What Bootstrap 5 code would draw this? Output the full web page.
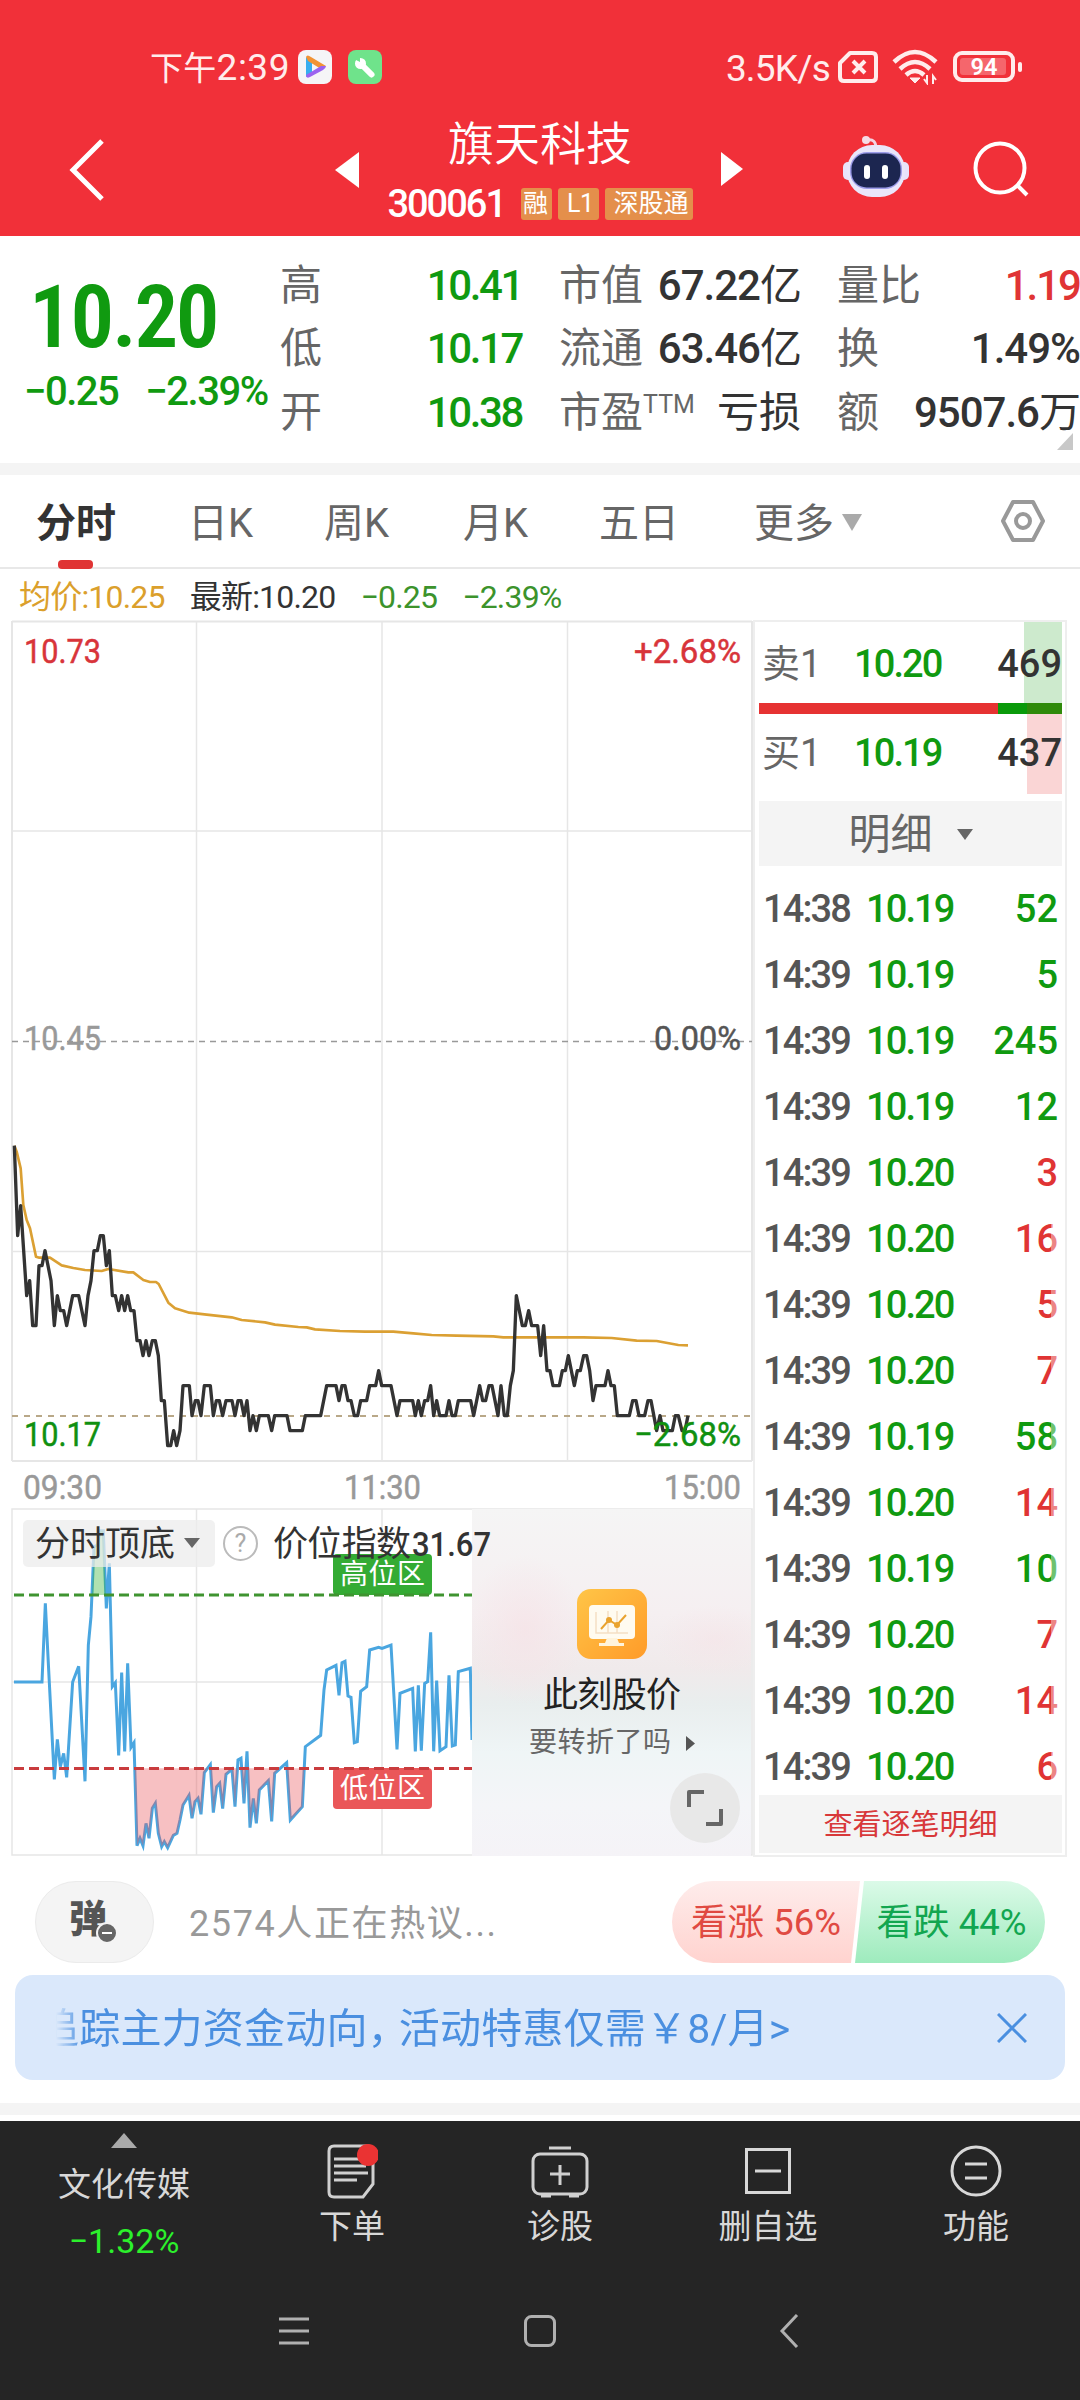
<!DOCTYPE html>
<html lang="zh-CN">
<head>
<meta charset="utf-8">
<meta name="viewport" content="width=device-width, initial-scale=1">
<title>旗天科技 300061</title>
<link href="https://cdn.jsdelivr.net/npm/bootstrap@5.3.0/dist/css/bootstrap.min.css" rel="stylesheet">
<style>
:root{--up:#e03434;--down:#109a10;--ink:#333;--sub:#666;--line:#ebebeb}
body{width:1080px;height:2400px;margin:0;overflow:hidden;background:#fff;color:var(--ink);line-height:1;
 font-family:Roboto,"Noto Sans CJK SC",sans-serif;font-stretch:100%}
svg{display:block;flex:none}
.c-down{color:var(--down)}.c-up{color:var(--up)}.c-sub{color:var(--sub)}
.top-area{height:236px;background:#f13039;color:#fff}
.status-bar{height:134px;padding:0 58px 0 150px;font-size:33px;color:#ffecec}
.status-bar span{white-space:nowrap}
.title-bar{height:102px;padding:0 50px 0 69px}
.stock-name{font-size:46px;font-weight:350;line-height:58px}
.stock-code{font-size:38px;font-weight:500;letter-spacing:-2px;margin-right:10px}
.tag-chip{background:#e48f4b;color:#fff;font-size:25px;height:32px;line-height:32px;border-radius:3px;padding:0 4px;font-weight:400}
.quote{height:227px;position:relative}
.price-box{width:280px;padding:38px 0 0 24px}
.price-big{font-size:87px;font-weight:600;line-height:87px;margin-left:5px;letter-spacing:-2.3px;font-stretch:75%}
.price-chg{font-size:40px;font-weight:500;gap:27px;margin-top:11px;white-space:nowrap;letter-spacing:-1.5px}
.q-col{padding-top:18px;font-size:42px;white-space:nowrap}
.q-col>div{height:63.5px}
.q-col b{font-weight:500;letter-spacing:-2.4px}
.q-col.wide-num b{letter-spacing:-1px}
.q-col.wide-num b.tight{letter-spacing:-2px}
.w-q{width:242px}
.divider-bar{height:12px;background:#f4f4f4}
.tabs{height:94px;display:grid;grid-template-columns:152px 136px 139px 136px 155px 247px 50px;padding-left:36px;border-bottom:2px solid #e8e8e8;font-size:40px;color:var(--sub);align-items:center}
.tabs>span{padding-top:6px}
.tabs .active{color:var(--ink);font-weight:600;position:relative}
.tabs .active::after{content:"";position:absolute;left:22px;bottom:-25px;width:35px;height:9px;border-radius:4px;background:var(--up)}
.info-row{height:51px;padding:4px 0 0 19px;font-size:32px;gap:25px;white-space:nowrap;letter-spacing:-.8px}
.main-area{height:1240px;padding-left:10px}
.left-col{width:743px}
.side-panel{width:314px;height:1237px;border:2px solid #eee;padding:0 3px 0 4px;font-weight:500;position:relative;letter-spacing:-1.9px}
.book-row{padding:0 0 0 3px;font-size:38px;position:relative}
.vol{letter-spacing:0}
.depth{position:absolute;right:0;top:0;height:100%}
.tick-list .tick{height:66px;padding:0 4px 0 4px;font-size:38px}
.fadeout{position:absolute;right:3px;top:580px;bottom:62px;width:11px;background:rgba(255,255,255,.4)}
.detail-btn{height:65px;background:#f4f4f4;color:var(--sub);font-size:42px;font-weight:400;letter-spacing:0;padding-top:2px}
.more-btn{height:58px;background:#f4f4f4;color:#d8383a;font-size:29px;font-weight:400;padding-top:3px;letter-spacing:0}
.talk-row{height:115px;padding:21px 35px 12px}
.dm-pill{width:119px;height:82px;border-radius:41px;background:#f4f4f4;border:1px solid #ebebeb}
.talk-txt{font-size:36px;color:#999;margin-left:35px;letter-spacing:1.6px;padding-top:3px}
.vote{width:373px;height:82px;border-radius:41px;overflow:hidden;font-size:36.500px;white-space:nowrap}
.vote>div{padding-top:2px}
.vote-up{width:190px;background:linear-gradient(#feeceb,#ffd3cf);color:#e04a42;clip-path:polygon(0 0,100% 0,calc(100% - 9px) 100%,0 100%)}
.vote-down{width:192px;margin-left:-5px;background:linear-gradient(#dbfae8,#9eebbd);color:#12a650;clip-path:polygon(9px 0,100% 0,100% 100%,0 100%);padding-left:3px}
.promo{margin:0 15px;height:105px;border-radius:18px;background:#dae8fb;color:#4a8fe0;font-size:41px;padding:0 38px 0 41px}
.promo-txt{height:60px;line-height:62px;width:780px;overflow:hidden;white-space:nowrap;letter-spacing:.2px;-webkit-mask:linear-gradient(90deg,transparent,#000 26px);mask:linear-gradient(90deg,transparent,#000 26px)}
.promo-txt span{display:inline-block;margin-left:-18px}
.promo-txt i{font-style:normal;margin-right:-10px}
.bottom-bar{height:279px;background:#252525;color:#d8d8d8;font-size:33px}
.bottom-bar .item{width:208px}
.sys-nav{height:40px;margin-top:-5px}
</style>
</head>
<body>
<header class="top-area">
 <div class="status-bar d-flex align-items-center">
  <span style="letter-spacing:.3px;width:138px;padding-top:1px">下午<span style="font-size:37px;letter-spacing:.5px">2:39</span></span>
  <svg style="margin-left:10px" width="34" height="34" viewBox="0 0 34 34"><rect width="34" height="34" rx="8" fill="#f5f5f7"/><path d="M8 7v20l6-3V12z" fill="#36aef0"/><path d="M8 7q1-3 5 0l15 9-5 3L10 11z" fill="#f29335"/><path d="M28 16q0 2-3 4L12 27q-4 2-4-2l15-9z" fill="#9b63f0"/></svg>
  <svg style="margin-left:16px" width="34" height="34" viewBox="0 0 34 34"><rect width="34" height="34" rx="8" fill="#6fe38b"/><circle cx="12.500" cy="13.500" r="5.500" fill="#fff"/><path d="M12 4v8l-6-3z" fill="#6fe38b"/><path d="M14 15l9.500 9.500" stroke="#fff" stroke-width="6" stroke-linecap="round"/></svg>
  <span class="ms-auto" style="font-size:37px;letter-spacing:-.8px;margin-right:8px;padding-top:2px">3.5K/s</span>
  <svg width="40" height="34" viewBox="0 0 40 34" fill="none" stroke="#ffecec" stroke-width="4"><path d="M12 3h22q4 0 4 4v20q0 4-4 4H6q-4 0-4-4V13z" stroke-linejoin="round"/><path d="M15 11l12 12M27 11L15 23"/></svg>
  <svg style="margin-left:14px" width="46" height="36" viewBox="0 0 46 36" fill="none" stroke="#ffecec" stroke-width="4.500"><path d="M2 13q21-20 42 0M8 20q15-14 30 0M14 26q9-8 18 0"/><path d="M18 29h10l-5 5z" fill="#ffecec" stroke-width="1"/><path d="M35 26v8l-3-4M41 35v-8l3 4" stroke-width="2"/></svg>
  <svg style="margin-left:15px" width="69" height="32" viewBox="0 0 69 32"><rect x="2" y="2" width="58" height="27" rx="7" fill="none" stroke="#ffecec" stroke-width="4"/><rect x="7" y="7" width="46" height="17" rx="3" fill="#f5666c"/><rect x="65" y="11" width="4" height="10" rx="2" fill="#ffecec"/><text x="31" y="24" font-size="23" font-weight="600" fill="#fff" text-anchor="middle" textLength="27" lengthAdjust="spacingAndGlyphs">94</text></svg>
 </div>
 <div class="title-bar d-flex">
  <svg style="margin-top:5px" width="36" height="62" viewBox="0 0 36 62"><path d="M33 2L4 31l29 29" fill="none" stroke="#fff" stroke-width="5"/></svg>
  <svg style="margin:18px 0 0 230px" width="24" height="36"><path d="M24 0v36L0 18z" fill="#fff"/></svg>
  <div style="width:362px;margin-top:-19px" class="d-flex flex-column align-items-center">
   <div class="stock-name">旗天科技</div>
   <div class="d-flex align-items-center" style="height:36px;gap:6px;margin-top:13px"><span class="stock-code">300061</span><span class="tag-chip" style="padding-left:2px">融</span><span class="tag-chip" style="padding:0 5px 0 9px;letter-spacing:-.5px">L1</span><span class="tag-chip" style="padding:0 4px 0 9px">深股通</span></div>
  </div>
  <svg style="margin-top:18px" width="22" height="34"><path d="M0 0v34l22-17z" fill="#fff"/></svg>
  <svg style="margin:1px 0 0 99px" width="68" height="64" viewBox="0 0 68 64"><path d="M25 5q9-2 9 9" fill="none" stroke="#f3d3e2" stroke-width="3"/><circle cx="24" cy="5" r="4" fill="#f6dbe6"/><rect x="1" y="27" width="12" height="18" rx="5" fill="#e8e3fb"/><rect x="55" y="27" width="12" height="18" rx="5" fill="#e8e3fb"/><rect x="5" y="10" width="58" height="52" rx="25" fill="#eae6fa"/><rect x="8" y="17" width="52" height="37" rx="17" fill="#9b9be8"/><rect x="9.500" y="18.500" width="49" height="34" rx="15" fill="#1c2650"/><rect x="22" y="30" width="6" height="14" rx="3" fill="#fff"/><rect x="40" y="30" width="6" height="14" rx="3" fill="#fff"/></svg>
  <svg style="margin:7px 0 0 62px" width="58" height="58" viewBox="0 0 58 58" fill="none" stroke="#fff" stroke-width="4"><circle cx="28" cy="27" r="24.500"/><path d="M45 44l10 10"/></svg>
 </div>
</header>

<section class="quote d-flex">
 <div class="price-box c-down">
  <div class="price-big">10.20</div>
  <div class="price-chg d-flex"><span>−0.25</span><span>−2.39%</span></div>
 </div>
 <div class="q-col w-q">
  <div class="d-flex justify-content-between align-items-center"><span class="c-sub">高</span><b class="c-down">10.41</b></div>
  <div class="d-flex justify-content-between align-items-center"><span class="c-sub">低</span><b class="c-down">10.17</b></div>
  <div class="d-flex justify-content-between align-items-center"><span class="c-sub">开</span><b class="c-down">10.38</b></div>
 </div>
 <div class="q-col w-q wide-num" style="margin-left:37px">
  <div class="d-flex justify-content-between align-items-center"><span class="c-sub">市值</span><b>67.22<span class="fw-normal">亿</span></b></div>
  <div class="d-flex justify-content-between align-items-center"><span class="c-sub">流通</span><b>63.46<span class="fw-normal">亿</span></b></div>
  <div class="d-flex justify-content-between align-items-center"><span class="c-sub">市盈<sup style="font-size:25px;top:-14px">TTM</sup></span><span>亏损</span></div>
 </div>
 <div class="q-col wide-num" style="margin-left:36px;width:243px">
  <div class="d-flex justify-content-between align-items-center"><span class="c-sub">量比</span><b class="c-up tight">1.19</b></div>
  <div class="d-flex justify-content-between align-items-center"><span class="c-sub">换</span><b>1.49%</b></div>
  <div class="d-flex justify-content-between align-items-center"><span class="c-sub">额</span><b>9507.6<span class="fw-normal">万</span></b></div>
 </div>
 <svg class="position-absolute" style="right:7px;bottom:13px" width="16" height="17"><path d="M16 0v17H0z" fill="#c8c8c8"/></svg>
</section>
<div class="divider-bar"></div>

<nav class="tabs">
 <span class="active">分时</span><span>日K</span><span>周K</span><span>月K</span><span>五日</span>
 <span class="d-flex align-items-center">更多<svg style="margin:-4px 0 0 8px" width="20" height="17"><path d="M0 0h20L10 17z" fill="#aaa"/></svg></span>
 <svg width="44" height="44" viewBox="0 0 44 44" fill="none" stroke="#999" stroke-width="4"><path d="M12 3h20l10 19-10 19H12L2 22z" stroke-linejoin="round"/><circle cx="22" cy="22" r="7"/></svg>
</nav>

<div class="info-row d-flex align-items-center">
 <span style="color:#dba02c">均价:10.25</span><span>最新:10.20</span><span style="color:#3c932c">−0.25</span><span style="color:#3c932c">−2.39%</span>
</div>

<main class="main-area d-flex">
 <div class="left-col">
  <svg width="743" height="1240" viewBox="10 620 743 1240" font-size="34">
   <defs>
    <clipPath id="low"><rect x="402" y="835" width="512" height="300"/></clipPath>
    <clipPath id="high"><rect x="276" y="90" width="44" height="225"/></clipPath>
    <linearGradient id="haze" x1="0" y1="0" x2="0" y2="1"><stop offset="0" stop-color="#f5f5f5"/><stop offset=".3" stop-color="#f5eff1"/><stop offset=".46" stop-color="#f0eaeb"/><stop offset=".56" stop-color="#e9eeee"/><stop offset=".7" stop-color="#eff5f6"/><stop offset=".85" stop-color="#f4f5f8"/><stop offset="1" stop-color="#f5f3f7"/></linearGradient>
    <radialGradient id="blush"><stop offset="0" stop-color="#f6e2e6"/><stop offset="1" stop-color="#f6e2e6" stop-opacity="0"/></radialGradient>
    <linearGradient id="gold" x1="0" y1="0" x2="1" y2="1"><stop offset="0" stop-color="#ffc547"/><stop offset="1" stop-color="#ff9b29"/></linearGradient>
    <clipPath id="adbox"><rect x="472" y="1509" width="279" height="347"/></clipPath>
   </defs>
   <g fill="none" stroke="#e6e6e6" stroke-width="1.500">
    <path d="M12 621.500H752M12 1461H752M12 621V1461M752 621V1461" stroke-width="2"/>
    <path d="M196.500 621V1461M382 621V1461M567.500 621V1461M12 831H752M12 1251.500H752"/>
    <path d="M12 1509H752V1855H12zM196.500 1509V1855M382 1509V1855M12 1682H472"/>
   </g>
   <path d="M12 1041.500H752" stroke="#999" stroke-width="1.500" stroke-dasharray="6 5"/>
   <path d="M12 1416H752" stroke="#b9a888" stroke-width="1.800" stroke-dasharray="6 6"/>
   <g fill="none" stroke-linejoin="round" transform="translate(0 1120) scale(.33333)">
    <polyline stroke="#dba033" stroke-width="8" points="43,77 50,95 62,145 70,255 80,300 90,325 108,410 118,413 150,413 185,436 220,444 255,450 305,453 325,447 385,457 400,457 430,480 450,486 468,486 476,492 505,548 525,565 568,578 620,584 695,592 725,600 795,607 825,614 895,621 920,622 945,628 1020,633 1095,635 1180,635 1240,640 1295,645 1370,647 1480,649 1510,652 1750,652 1835,654 1910,662 1970,663 2035,675 2064,676"/>
    <polyline stroke="#333" stroke-width="10" points="43,77 53,347 62,257 80,527 89,482 98,617 108,617 117,437 126,437 135,392 144,437 153,482 163,617 172,527 181,572 191,572 200,617 218,527 236,527 255,617 264,527 273,482 282,392 292,392 301,347 310,347 319,437 328,392 337,527 346,527 356,572 365,527 374,572 383,527 392,572 402,572 411,662 420,662 429,707 438,662 447,707 457,662 466,662 475,707 484,842 493,842 503,977 512,977 521,932 530,977 540,932 549,797 568,797 576,887 586,842 594,842 603,887 613,797 631,797 640,887 649,842 658,842 668,887 678,842 696,842 705,887 714,842 723,842 732,887 741,842 750,932 759,887 769,932 778,887 805,887 815,932 824,887 861,887 870,932 907,932 916,887 962,887 980,797 1008,797 1017,842 1026,797 1035,797 1044,842 1053,842 1063,887 1073,887 1082,842 1100,842 1109,797 1127,797 1136,752 1145,797 1173,797 1191,887 1200,842 1238,842 1246,887 1255,842 1264,887 1274,842 1283,842 1292,797 1301,887 1310,842 1319,887 1338,887 1347,842 1356,887 1366,887 1375,842 1412,842 1421,887 1439,797 1448,842 1457,842 1467,797 1476,797 1494,887 1503,797 1513,887 1522,887 1531,797 1540,752 1549,527 1567,617 1576,617 1586,572 1595,617 1613,617 1622,707 1631,617 1641,752 1650,752 1659,797 1678,797 1687,752 1696,752 1705,707 1723,797 1732,752 1741,752 1751,707 1760,707 1769,752 1779,842 1788,797 1815,797 1824,752 1833,797 1843,797 1852,887 1888,887 1898,842 1908,842 1917,887 1934,887 1944,842 1953,842 1970,932 1980,887 1989,932 2017,932 2026,887 2035,887 2046,932 2055,932 2064,887"/>
   </g>
   <g stroke-width=".5">
    <text x="24" y="663" fill="#d8343a" stroke="#d8343a" textLength="77" lengthAdjust="spacingAndGlyphs">10.73</text>
    <text x="634" y="663" fill="#d8343a" stroke="#d8343a" textLength="107" lengthAdjust="spacingAndGlyphs">+2.68%</text>
    <text x="24" y="1050" fill="#999" stroke="#999" textLength="77" lengthAdjust="spacingAndGlyphs">10.45</text>
    <text x="654" y="1050" fill="#555" stroke="#555" textLength="87" lengthAdjust="spacingAndGlyphs">0.00%</text>
    <text x="24" y="1446" fill="#109010" stroke="#109010" textLength="77" lengthAdjust="spacingAndGlyphs">10.17</text>
    <text x="634" y="1446" fill="#109010" stroke="#109010" textLength="107" lengthAdjust="spacingAndGlyphs">−2.68%</text>
    <g fill="#999" stroke="#999"><text x="23" y="1498.500" textLength="79" lengthAdjust="spacingAndGlyphs">09:30</text><text x="344" y="1498.500" textLength="77" lengthAdjust="spacingAndGlyphs">11:30</text><text x="664" y="1498.500" textLength="77" lengthAdjust="spacingAndGlyphs">15:00</text></g>
   </g>
   <g transform="translate(0 1490) scale(.33333)">
    <polyline fill="none" stroke="#4aa6e0" stroke-width="9" points="42,576 126,576 136,340 145,520 163,868 172,748 181,830 191,790 200,862 218,576 236,529 255,874 265,465 273,380 282,170 292,165 301,122 310,122 319,355 328,220 337,590 346,578 356,796 365,548 374,784 383,520 393,772 402,758 411,1067 420,1045 429,1067 438,1000 447,1045 457,955 466,940 475,1030 485,1070 493,1055 503,1073 520,1036 531,1030 540,990 549,945 567,916 576,985 585,935 594,925 603,973 613,848 631,824 640,968 650,890 659,880 668,956 678,853 696,838 705,950 714,810 723,805 732,940 741,784 750,1013 760,925 769,1000 778,900 805,872 815,994 824,850 860,818 871,990 907,950 916,770 962,736 972,600 980,540 1008,526 1017,616 1026,518 1035,514 1044,618 1053,622 1063,758 1072,755 1082,604 1100,590 1109,480 1136,472 1146,475 1173,465 1191,778 1200,610 1238,595 1246,784 1255,586 1264,782 1274,580 1283,575 1292,427 1301,784 1310,572 1320,782 1338,770 1347,556 1357,768 1366,765 1375,545 1411,535 1416,750"/>
    <path clip-path="url(#low)" fill="#e85055" fill-opacity=".36" d="M402 758L411 1067 420 1045 429 1067 438 1000 447 1045 457 955 466 940 475 1030 485 1070 493 1055 503 1073 520 1036 531 1030 540 990 549 945 567 916 576 985 585 935 594 925 603 973 613 848 631 824 640 968 650 890 659 880 668 956 678 853 696 838 705 950 714 810 723 805 732 940 741 784 750 1013 760 925 769 1000 778 900 805 872 815 994 824 850 860 818 871 990 907 950 916 770z"/>
    <path clip-path="url(#high)" fill="#30b030" fill-opacity=".38" d="M273 380L282 170 292 165 301 122 310 122 319 355z"/>
   </g>
   <rect x="333" y="1554" width="99" height="41" rx="4" fill="#34ab34"/><rect x="333" y="1768" width="99" height="41" rx="4" fill="#ea5759"/>
   <path d="M14 1595H472" stroke="#3f9430" stroke-width="3" stroke-dasharray="10 5"/>
   <path d="M14 1768.500H472" stroke="#c93c3e" stroke-width="3" stroke-dasharray="10 5"/>
   <g fill="#fff" font-size="28"><text x="340" y="1584" textLength="85">高位区</text><text x="340" y="1798" textLength="85">低位区</text></g>
   <g clip-path="url(#adbox)"><rect x="472" y="1509" width="281" height="348" fill="url(#haze)"/><ellipse cx="525" cy="1630" rx="60" ry="75" fill="url(#blush)" opacity=".7"/><ellipse cx="715" cy="1640" rx="60" ry="35" fill="url(#blush)" opacity=".5"/></g>
   <rect x="23" y="1520" width="192" height="47" rx="5" fill="#ececec" fill-opacity=".75"/>
   <text x="35" y="1556" font-size="35" fill="#333" textLength="140">分时顶底</text>
   <path d="M184 1538h16l-8 10z" fill="#666"/>
   <circle cx="240.500" cy="1543.500" r="16.500" fill="none" stroke="#bbb" stroke-width="2"/><text x="240.500" y="1552" text-anchor="middle" font-size="25" fill="#aaa">?</text>
   <text x="273" y="1556" font-size="35" fill="#333" textLength="138">价位指数</text><text x="412" y="1555.500" font-size="34" font-weight="500" fill="#333" textLength="79" lengthAdjust="spacingAndGlyphs">31.67</text>
   <rect x="577" y="1589" width="70" height="70" rx="14" fill="url(#gold)"/>
   <rect x="589" y="1605" width="46" height="34" rx="4" fill="#fffbf0"/><path d="M607 1638h10l2 5h5v3h-25v-3h6z" fill="#fff4dc"/><path d="M596 1612v21h32M608 1611v22M617 1611v22" fill="none" stroke="#f5dfc4" stroke-width="1.500"/><path d="M601 1629l8-9 8 5 9-10" fill="none" stroke="#e9a32f" stroke-width="2"/><circle cx="609" cy="1620" r="3" fill="#e9a32f"/><circle cx="617" cy="1625" r="3" fill="#e9a32f"/>
   <text x="543" y="1707" font-size="35" fill="#222" textLength="138">此刻股价</text>
   <text x="529" y="1752" font-size="28" fill="#666" textLength="142">要转折了吗</text>
   <path d="M686 1736v15l9-7.500z" fill="#555"/>
   <circle cx="705" cy="1808" r="35" fill="#e8e8e8"/><path d="M689 1807v-15h15M721 1809v15h-15" fill="none" stroke="#666" stroke-width="4" stroke-linejoin="round"/>
  </svg>
 </div>
 <aside class="side-panel">
  <div class="book-row d-flex align-items-center" style="height:81px;padding-top:2px"><i class="depth" style="width:38px;background:#cdeacd"></i><span class="c-sub fw-normal position-relative" style="width:92px;letter-spacing:0">卖1</span><span class="c-down position-relative">10.20</span><span class="vol ms-auto position-relative">469</span></div>
  <div class="d-flex" style="height:11px"><div style="width:79%;background:#e63232"></div><div class="flex-fill" style="background:linear-gradient(90deg,#0a9a0a 46%,#2f8a0a 46%)"></div></div>
  <div class="book-row d-flex align-items-center" style="height:80px;padding-bottom:3px"><i class="depth" style="width:35px;background:#fad5d5"></i><span class="c-sub fw-normal position-relative" style="width:92px;letter-spacing:0">买1</span><span class="c-down position-relative">10.19</span><span class="vol ms-auto position-relative">437</span></div>
  <div class="detail-btn d-flex align-items-center justify-content-center" style="margin-top:7px">明细<svg style="margin-left:24px" width="16" height="11"><path d="M0 0h16L8 11z" fill="#666"/></svg></div>
  <div class="tick-list" id="ticks" style="padding-top:10px"></div>
  <div class="fadeout"></div>
  <div class="more-btn d-flex align-items-center justify-content-center" style="margin-top:-5px">查看逐笔明细</div>
 </aside>
</main>

<section class="talk-row d-flex align-items-center">
 <div class="dm-pill d-flex align-items-center justify-content-center position-relative"><span style="font-size:38px;font-weight:800;color:#555;margin:-7px 0 0 -13px">弹</span><svg class="position-absolute" style="left:60px;top:40px" width="22" height="22"><circle cx="11" cy="11" r="10" fill="#666" stroke="#f4f4f4" stroke-width="2"/><path d="M6 11h10" stroke="#fff" stroke-width="2"/></svg></div>
 <span class="talk-txt">2574人正在热议...</span>
 <div class="vote d-flex ms-auto"><div class="vote-up d-flex align-items-center justify-content-center">看涨 56%</div><div class="vote-down d-flex align-items-center justify-content-center">看跌 44%</div></div>
</section>
<div class="promo d-flex align-items-center justify-content-between">
 <div class="promo-txt"><span>追踪主力资金动向<i>，</i>活动特惠仅需￥8/月&gt;</span></div>
 <svg width="30" height="30" viewBox="0 0 30 30"><path d="M1 1l28 28M29 1L1 29" stroke="#4a8fe0" stroke-width="3"/></svg>
</div>
<div style="height:23px"></div>
<div class="divider-bar"></div>
<div style="height:6px"></div>

<footer class="bottom-bar">
 <div class="d-flex" style="height:195px">
  <div class="d-flex flex-column align-items-center" style="width:248px;padding-top:12px"><svg width="26" height="15"><path d="M0 15L13 0l13 15z" fill="#aaa"/></svg><span style="margin-top:20px">文化传媒</span><span style="margin-top:23px;color:#2cf02c;font-size:34px">−1.32%</span></div>
  <div class="item d-flex flex-column align-items-center"><svg style="margin-top:22px" width="52" height="56" viewBox="0 0 52 56" fill="none" stroke="#d0d0d0" stroke-width="3"><path d="M8 3h34q5 0 5 5v33L37 54H8q-5 0-5-5V8q0-5 5-5z"/><path d="M8 16h32M8 23h32M8 30h34M8 37h23"/><circle cx="42" cy="12" r="11" fill="#ea3333" stroke="none"/></svg><span style="margin-top:11px">下单</span></div>
  <div class="item d-flex flex-column align-items-center"><svg style="margin-top:24px" width="58" height="54" viewBox="0 0 58 54" fill="none" stroke="#d0d0d0" stroke-width="3"><rect x="2" y="9" width="54" height="40" rx="7"/><path d="M18 3h22M29 20v20M19 29h20M10 51h10M38 51h10"/></svg><span style="margin-top:11px">诊股</span></div>
  <div class="item d-flex flex-column align-items-center"><svg style="margin-top:27px" width="46" height="46" fill="none" stroke="#d8d8d8" stroke-width="3"><rect x="1.500" y="1.500" width="43" height="43"/><path d="M10 23h26"/></svg><span style="margin-top:16px">删自选</span></div>
  <div class="item d-flex flex-column align-items-center"><svg style="margin-top:24px" width="52" height="52" fill="none" stroke="#d8d8d8" stroke-width="3"><circle cx="26" cy="26" r="24"/><path d="M15 19h22M15 33h22"/></svg><span style="margin-top:13px">功能</span></div>
 </div>
 <div class="sys-nav d-flex align-items-center" style="padding-left:279px">
  <svg width="30" height="34" stroke="#b0b0b0" stroke-width="3"><path d="M0 5h30M0 17h30M0 29h30"/></svg>
  <svg style="margin-left:215px" width="32" height="34" fill="none" stroke="#b0b0b0" stroke-width="3"><rect x="1.500" y="2.500" width="29" height="29" rx="6"/></svg>
  <svg style="margin-left:223px" width="20" height="34" fill="none" stroke="#b0b0b0" stroke-width="3"><path d="M18 1L3 17l15 16"/></svg>
 </div>
</footer>
<script src="https://cdn.jsdelivr.net/npm/bootstrap@5.3.0/dist/js/bootstrap.bundle.min.js"></script>
<script>
const ticks=[["14:38","10.19",52,0],["14:39","10.19",5,0],["14:39","10.19",245,0],["14:39","10.19",12,0],["14:39","10.20",3,1],["14:39","10.20",16,1],["14:39","10.20",5,1],["14:39","10.20",7,1],["14:39","10.19",58,0],["14:39","10.20",14,1],["14:39","10.19",10,0],["14:39","10.20",7,1],["14:39","10.20",14,1],["14:39","10.20",6,1]];
document.getElementById("ticks").innerHTML=ticks.map(t=>`<div class="tick d-flex align-items-center"><span style="width:103px;color:#555">${t[0]}</span><span class="c-down">${t[1]}</span><span class="vol ms-auto ${t[3]?"c-up":"c-down"}">${t[2]}</span></div>`).join("");
</script>
</body>
</html>
